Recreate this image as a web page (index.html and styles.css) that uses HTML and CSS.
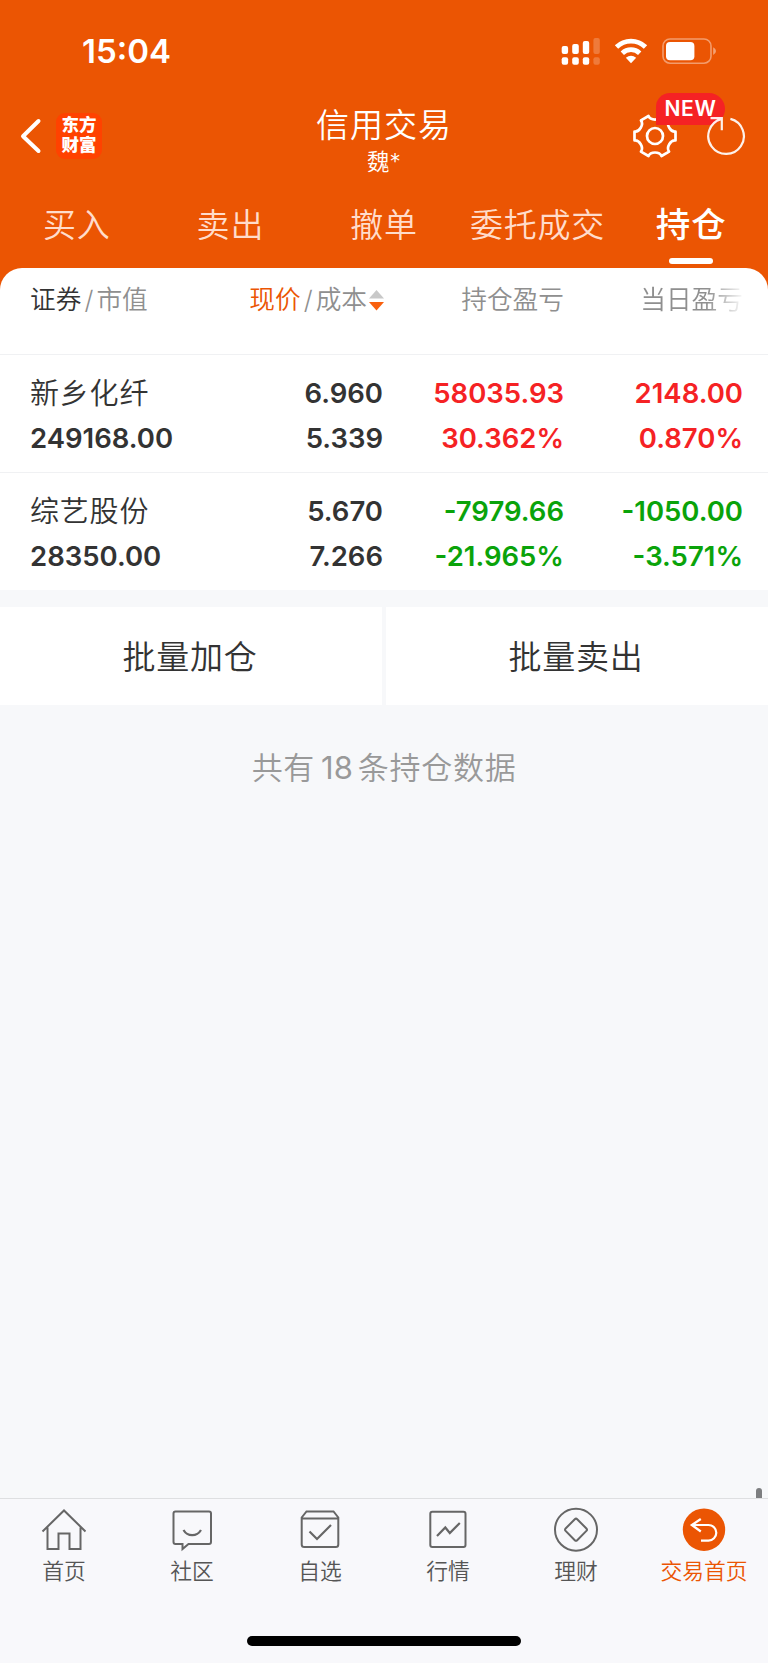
FILE: index.html
```html
<!DOCTYPE html>
<html lang="zh-CN">
<head>
  <meta charset="UTF-8" />
  <meta name="viewport" content="width=device-width, initial-scale=1.0" />
  <title>信用交易</title>
  <link rel="stylesheet" href="styles.css">
</head>

<body>
  <div class="app">

    <header class="header">
      <!-- Status bar -->
      <div class="status">
        <span class="time">15:04</span>
        <svg class="status-icons" width="156" height="28" viewBox="561 37 156 28" fill="#fff">
          <rect x="561.7" y="46" width="6.4" height="8" rx="2"/>
          <rect x="572.2" y="44" width="6.6" height="10" rx="2"/>
          <rect x="582.8" y="41" width="6.4" height="13" rx="2"/>
          <rect x="593.4" y="38" width="6.4" height="16" rx="2" opacity=".22"/>
          <rect x="561.7" y="57.3" width="6.4" height="7.4" rx="2"/>
          <rect x="572.2" y="57.3" width="6.6" height="7.4" rx="2"/>
          <rect x="582.8" y="57.3" width="6.4" height="7.4" rx="2"/>
          <rect x="593.4" y="57.3" width="6.4" height="7.4" rx="2" opacity=".22"/>
          <path d="M616.5 47A20.8 20.8 0 0 1 645.5 47M622.3 53.2A12.6 12.6 0 0 1 639.7 53.2" fill="none" stroke="#fff" stroke-width="4.8"/>
          <path d="M625.8 57.8Q631 53.8 636.2 57.8L631 63.2Z"/>
          <rect x="663" y="39" width="48" height="24.2" rx="7" fill="none" stroke="#fff" stroke-width="1.6" opacity=".42"/>
          <rect x="666" y="42" width="28.4" height="18.2" rx="4"/>
          <path d="M713.2 47.2Q716 48.6 716 51.1T713.2 55Z" opacity=".45"/>
        </svg>
      </div>

      <!-- Title bar -->
      <div class="nav">
        <div class="nav-left">
          <svg width="22" height="36" viewBox="0 0 22 36" fill="none" stroke="#fff" stroke-width="4" stroke-linecap="round" stroke-linejoin="round">
            <path d="M18.5 3 3 18.2 18.5 33"/>
          </svg>
          <div class="logo"><span>东方</span><span>财富</span></div>
        </div>
        <div class="nav-title">
          <h1>信用交易</h1>
          <p>魏*</p>
        </div>
        <div class="nav-right">
          <div class="settings">
            <svg width="46" height="46" viewBox="-23 -23 46 46" fill="none" stroke="#fff" stroke-width="2.7" stroke-linejoin="round">
              <path d="M20.5 4.4C15.5 3.75 11 11.55 14.05 15.6L6.5 20C4.5 15.3-4.5 15.3-6.5 20L-14.05 15.6C-11 11.55-15.5 3.75-20.5 4.4L-20.5-4.4C-15.5-3.75-11-11.55-14.05-15.6L-6.5-20C-4.5-15.3 4.5-15.3 6.5-20L14.05-15.6C11-11.55 15.5-3.75 20.5-4.4Z"/>
              <circle r="8"/>
            </svg>
            <span class="badge">NEW</span>
          </div>
          <svg class="refresh" width="42" height="42" viewBox="706 115 42 42" fill="none" stroke="#fff" stroke-width="2.2" opacity=".92">
            <path d="M710.5 118.2H721.8V130.3M730.4 118.9A17.8 17.8 0 1 1 721 119.1"/>
          </svg>
        </div>
      </div>

      <nav class="tabs">
        <a class="tab">买入</a>
        <a class="tab">卖出</a>
        <a class="tab">撤单</a>
        <a class="tab">委托成交</a>
        <a class="tab active">持仓</a>
      </nav>
    </header>

    <!-- Positions -->
    <section class="card">
      <div class="row thead">
        <div class="cell"><span class="dark">证券</span><i>/</i>市值</div>
        <div class="cell"><span class="orange">现价</span><i>/</i>成本<svg class="sort" width="15" height="21" viewBox="0 0 15 21"><path d="M7.5 0 15 8.6H0Z" fill="#c8c8c8"/><path d="M0 12H15L7.5 20.6Z" fill="#f9600e"/></svg></div>
        <div class="cell">持仓盈亏</div>
        <div class="cell fade">当日盈亏</div>
      </div>
      <div class="row">
        <div class="cell"><span class="name">新乡化纤</span><span>249168.00</span></div>
        <div class="cell"><span>6.960</span><span>5.339</span></div>
        <div class="cell up"><span>58035.93</span><span>30.362%</span></div>
        <div class="cell up"><span>2148.00</span><span>0.870%</span></div>
      </div>
      <div class="row">
        <div class="cell"><span class="name">综艺股份</span><span>28350.00</span></div>
        <div class="cell"><span>5.670</span><span>7.266</span></div>
        <div class="cell down"><span>-7979.66</span><span>-21.965%</span></div>
        <div class="cell down"><span>-1050.00</span><span>-3.571%</span></div>
      </div>
    </section>

    <div class="actions">
      <button>批量加仓</button>
      <button>批量卖出</button>
    </div>

    <p class="summary">共有<b>18</b>条持仓数据</p>

    <!-- Bottom bar -->
    <footer class="tabbar">
      <span class="scrollbar"></span>
      <div class="items">
        <a class="item">
          <svg width="46" height="46" viewBox="0 0 46 46">
            <path d="M1.5 24.5 23 3.5 44.5 24.5M6.5 20.5V42H17.5V26.5H28.5V42H39.5V20.5"/>
          </svg>
          首页
        </a>
        <a class="item">
          <svg width="46" height="46" viewBox="0 0 46 46">
            <path d="M6.5 4.5H40Q42 4.5 42 6.5V35Q42 37 40 37H19.5L13.5 42V37H6.5Q4.5 37 4.5 35V6.5Q4.5 4.5 6.5 4.5Z"/>
            <path d="M14.5 23Q17.5 28.2 23.2 28.2T32 23" stroke-width="2.2"/>
          </svg>
          社区
        </a>
        <a class="item">
          <svg width="46" height="46" viewBox="0 0 46 46">
            <path d="M4.7 10.5 9.5 4.5H36.5L41.3 10.5V37.5Q41.3 40 38.8 40H7.2Q4.7 40 4.7 37.5ZM4.7 11.5H41.3"/>
            <path d="M12.5 24.5 20 32 34 18" stroke-width="2.2"/>
          </svg>
          自选
        </a>
        <a class="item">
          <svg width="46" height="46" viewBox="0 0 46 46">
            <rect x="5.3" y="4.7" width="35.2" height="35.3" rx="2"/>
            <path d="M12 29 20.3 20.5 24.8 26 34.8 16" stroke-width="2.2"/>
          </svg>
          行情
        </a>
        <a class="item">
          <svg width="46" height="46" viewBox="0 0 46 46">
            <circle cx="23" cy="22.7" r="21"/>
            <path d="M21.8 12.2Q23 11 24.2 12.2L33.4 21.5Q34.6 22.7 33.4 23.9L24.2 33.2Q23 34.4 21.8 33.2L12.6 23.9Q11.4 22.7 12.6 21.5Z"/>
          </svg>
          理财
        </a>
        <a class="item active">
          <svg width="46" height="46" viewBox="0 0 46 46">
            <circle class="disc" cx="23" cy="22.7" r="21.2"/>
            <path class="arrow" d="M19.8 12 10.8 18 19.8 24.5M11.5 18H27.5A7.8 7.8 0 0 1 27.5 33.6H20"/>
          </svg>
          交易首页
        </a>
      </div>
      <div class="home-bar"></div>
    </footer>

  </div>
</body>
</html>
```
FILE: styles.css
```css
* {
  box-sizing: border-box;
}

body {
  margin: 0;
  font-family: Inter, "Noto Sans CJK SC", sans-serif;
  background-color: #f7f8fa;
  color: #333;
}

h1, p {
  margin: 0;
  font-weight: 350;
}

svg {
  display: block;
  flex: none;
}

.app {
  display: flex;
  flex-direction: column;
  width: 768px;
  height: 1663px;
  overflow: hidden;
}

/* Header */
.header {
  height: 290px;
  background-color: #eb5503;
  color: #fff;
}

.status {
  display: flex;
  justify-content: space-between;
  height: 94px;
  padding: 37px 51px 0 82px;
}

.time {
  font-size: 33px;
  font-weight: 600;
  line-height: 28px;
}

.nav {
  display: grid;
  grid-template-columns: 1fr 200px 1fr;
  height: 90px;
}

.nav-left {
  display: flex;
  align-items: flex-start;
  gap: 14px;
  padding: 19px 0 0 20px;
}

.nav-left svg {
  margin-top: 5px;
}

.logo {
  display: flex;
  flex-direction: column;
  align-items: center;
  width: 46px;
  height: 46px;
  padding-top: 2px;
  border-radius: 9px;
  background-color: #ff4200;
  font-family: "Liberation Sans", "Noto Sans CJK SC", sans-serif;
  font-size: 17.5px;
  font-weight: 900;
  line-height: 20px;
}

.nav-title {
  padding-top: 11px;
  text-align: center;
}

.nav-title h1 {
  font-size: 33px;
  line-height: 40px;
  letter-spacing: 1px;
}

.nav-title p {
  font-size: 22.5px;
  line-height: 34px;
}

.nav-right {
  display: flex;
  justify-content: flex-end;
  gap: 28px;
  padding: 19px 20px 0 0;
}

.settings {
  position: relative;
  width: 46px;
}

.badge {
  position: absolute;
  left: 24px;
  top: -20px;
  width: 69px;
  height: 32px;
  border-radius: 14px 16px 16px 0;
  background-color: #f52224;
  font-size: 21px;
  font-weight: 600;
  line-height: 32px;
  letter-spacing: 0.6px;
  text-align: center;
}

.refresh {
  position: relative;
  margin-top: 2px;
}

.tabs {
  display: flex;
  height: 84px;
}

.tab {
  flex: 1;
  display: flex;
  flex-direction: column;
  align-items: center;
  padding-top: 16px;
  font-size: 33px;
  font-weight: 350;
  line-height: 50px;
  letter-spacing: 0.8px;
  color: #ffdccb;
}

.tab.active {
  font-size: 34.5px;
  font-weight: 500;
  color: #fff;
}

.tab.active::after {
  content: "";
  width: 44px;
  height: 6px;
  margin-top: 8px;
  border-radius: 3px;
  background-color: #fff;
}

/* Positions */
.card {
  margin-top: -22px;
  border-radius: 22px 22px 0 0;
  background-color: #fff;
}

.row {
  display: grid;
  grid-template-columns: 181px 172px 181px 179px;
  height: 118px;
  padding: 16px 25px 0 30px;
  border-top: 1px solid #f0f1f3;
}

.cell {
  display: flex;
  flex-direction: column;
  align-items: flex-end;
  font-size: 27.5px;
  font-weight: 600;
  line-height: 45px;
}

.cell:first-child {
  align-items: flex-start;
}

.cell .name {
  font-size: 29px;
  font-weight: 350;
  letter-spacing: 0.8px;
}

.up {
  color: #f52224;
}

.down {
  color: #0aa30a;
}

.thead {
  height: 86px;
  padding-top: 12px;
  border-top: none;
}

.thead .cell {
  flex-direction: row;
  align-items: flex-start;
  justify-content: flex-end;
  font-size: 25.7px;
  font-weight: 350;
  line-height: 40px;
  color: #8f8f8f;
}

.thead .cell:first-child {
  justify-content: flex-start;
}

.thead i {
  width: 15px;
  font-style: normal;
  text-align: center;
}

.dark {
  color: #333;
}

.orange {
  color: #eb5503;
}

.sort {
  margin: 10px -1px 0 2px;
}

.thead .fade {
  mask-image: linear-gradient(to right, #000 80%, transparent 101%);
}

/* Batch buttons */
.actions {
  display: flex;
  gap: 4px;
  margin-top: 17px;
}

.actions button {
  flex: 1;
  height: 98px;
  padding: 0 2px 2px 0;
  border: none;
  background-color: #fff;
  font-family: inherit;
  font-size: 33px;
  font-weight: 350;
  letter-spacing: 0.7px;
  color: #333;
}

.summary {
  margin-top: 40px;
  font-size: 31px;
  line-height: 46px;
  letter-spacing: 0.7px;
  text-align: center;
  color: #999;
}

.summary b {
  margin: 0 5px 0 6px;
  font-size: 31px;
  font-weight: 400;
  letter-spacing: 0;
}

/* Bottom bar */
.tabbar {
  position: relative;
  height: 165px;
  margin-top: auto;
  border-top: 1px solid #dedfe1;
  background-color: #f8f8fb;
}

.scrollbar {
  position: absolute;
  top: -11px;
  right: 6px;
  width: 6px;
  height: 10px;
  border-radius: 3px 3px 0 0;
  background-color: #7d7e80;
}

.items {
  display: flex;
  height: 137px;
  padding-top: 8px;
}

.item {
  flex: 1;
  display: flex;
  flex-direction: column;
  align-items: center;
  font-size: 21.8px;
  font-weight: 350;
  line-height: 36px;
  color: #555;
}

.item svg {
  fill: none;
  stroke: #666;
  stroke-width: 2;
}

.item.active {
  color: #eb5503;
}

.item .disc {
  fill: #eb5503;
  stroke: none;
}

.item .arrow {
  stroke: #fff;
  stroke-width: 2.2;
}

.home-bar {
  width: 274px;
  height: 10px;
  margin: 0 auto;
  border-radius: 5px;
  background-color: #000;
}
```
